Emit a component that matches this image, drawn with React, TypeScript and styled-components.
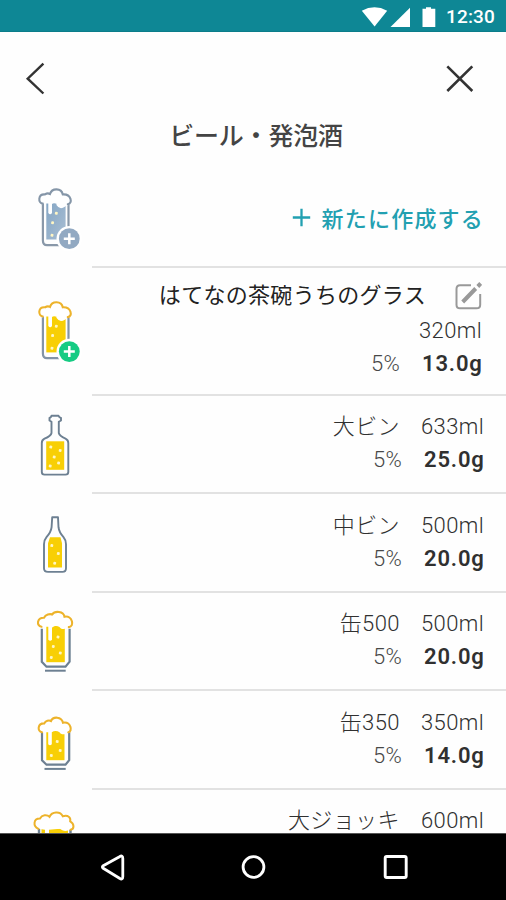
import React from "react";
import styled, { createGlobalStyle } from "styled-components";

const GlobalStyle = createGlobalStyle`
  * { box-sizing: border-box; }
  body {
    margin: 0;
    background: #fff;
    font-family: Roboto, "Noto Sans CJK JP", sans-serif;
    overflow: hidden;
  }
  svg { display: block; flex: none; }
`;

const Screen = styled.div`
  display: flex;
  flex-direction: column;
  width: 506px;
  height: 900px;
  overflow: hidden;
  background: #fefefe;
`;

const StatusBar = styled.header`
  display: flex;
  align-items: center;
  justify-content: flex-end;
  flex: none;
  height: 32px;
  padding-right: 10px;
  background: #0e8795;
  color: #fff;
  border-bottom: 1px solid #0b7d8a;
`;

const Clock = styled.span`
  margin-left: 9px;
  width: 50px;
  font-size: 19px;
  font-weight: 500;
  line-height: 32px;
  letter-spacing: 0.15px;
  padding-top: 3px;
`;

const Toolbar = styled.nav`
  display: flex;
  justify-content: space-between;
  flex: none;
  height: 84px;
  padding: 28px 28px 0 20px;
`;

const IconButton = styled.button`
  width: 36px;
  height: 36px;
  padding: 0;
  border: 0;
  background: none;
`;

const Title = styled.h1`
  flex: none;
  height: 52px;
  margin: 0;
  padding: 1px 0 0 6px;
  text-align: center;
  font-size: 25px;
  font-weight: 500;
  line-height: 40px;
  letter-spacing: -0.2px;
  color: #444;
`;

const List = styled.main`
  flex: 1;
  min-height: 0;
  overflow: hidden;
`;

const Row = styled.section<{ $height: number }>`
  display: grid;
  grid-template-columns: 92px 1fr;
  height: ${(p) => p.$height}px;
`;

const RowBody = styled.div<{ $top: number; $right: number }>`
  display: flex;
  flex-direction: column;
  padding: ${(p) => p.$top}px ${(p) => p.$right}px 0 0;
  border-bottom: 2px solid #e2e2e2;
`;

const Line = styled.div`
  display: flex;
  justify-content: flex-end;
  align-items: baseline;
  height: 33px;
  font-size: 22px;
  line-height: 33px;
  font-weight: 300;
  color: #303030;
  white-space: nowrap;
`;

const Name = styled.span`
  margin-right: 21px;
  letter-spacing: 0.4px;
`;

const Volume = styled.span`
  letter-spacing: 0.4px;
`;

const Percent = styled.span`
  margin-right: 22px;
  letter-spacing: 0.3px;
  color: #484848;
`;

const Alcohol = styled.span`
  font-weight: 600;
  letter-spacing: 0.8px;
  margin-right: -0.6px;
`;

const CreateLink = styled.button`
  display: flex;
  justify-content: flex-end;
  align-items: center;
  gap: 11px;
  height: 40px;
  padding: 0;
  border: 0;
  background: none;
  color: #22a0b1;
  font-family: inherit;
  font-size: 22px;
  font-weight: 500;
  letter-spacing: 1.2px;
  margin-right: -1px;
`;

const CustomHeader = styled.div`
  display: flex;
  justify-content: flex-end;
  align-items: center;
  gap: 28px;
  height: 36px;
`;

const CustomName = styled.span`
  font-size: 22px;
  line-height: 34px;
  letter-spacing: 0.3px;
  color: #222;
`;

const NavBar = styled.footer`
  flex: none;
  display: flex;
  justify-content: space-between;
  align-items: center;
  height: 67px;
  padding: 0 97px 0 99px;
  background: #000;
  border-top: 1px solid #555;
`;

const SLATE = "#6d8092";
const AMBER = "#edb32b";
const YELLOW = "#f8cf05";

const TALL_FOAM =
  "M22.8 28.6C17.8 28 17.8 18.8 25 19.4C26.5 18.4 28.5 18.2 30 19C32 12.7 41.3 12.9 42.8 19.4C51.4 18.8 53 28.6 47.8 29.2C45 29.4 44 32.2 41 32.2C38.8 32.2 38 30.4 37 29";

function Bubbles({ points }: { points: number[][] }) {
  return (
    <g fill="#fff6c4">
      {points.map(([x, y]) => (
        <rect key={`${x}-${y}`} x={x - 1.4} y={y - 1.4} width="2.8" height="2.8" rx=".8" transform={`rotate(12 ${x} ${y})`} />
      ))}
    </g>
  );
}

function TallGlass({ muted, y }: { muted?: boolean; y: number }) {
  return (
    <svg width="92" height="98" viewBox="-20 0 92 98">
      <defs>
        <linearGradient id="mutedBeer" x1="0" y1="0" x2="1" y2="1">
          <stop offset="0" stopColor="#83a5c4" />
          <stop offset="1" stopColor="#a9bed3" />
        </linearGradient>
      </defs>
      <g transform={`translate(0 ${y})`} fill="none">
        <path d="M22.9 29V65.5Q22.9 70.2 27 70.2H45Q48.5 69.5 48.5 65V29" stroke={muted ? "#8998a9" : "#8394a7"} strokeWidth="2.2" />
        <path d="M26.3 26H45.6V64.5H26.3Z" fill={muted ? "url(#mutedBeer)" : YELLOW} />
        <path d={`${TALL_FOAM}C35 28 33 28 32 29V38Q30.2 40.5 28.3 38V28.6Z`} fill="#fff" />
        <path d={TALL_FOAM} stroke="#fff" strokeWidth="2" />
        <path
          d="M22.8 28.6C17.8 28 17.8 18.8 25 19.4C26.5 18.4 28.5 18.2 30 19C32 12.7 41.3 12.9 42.8 19.4C51.4 18.8 53 28.6 47.8 29.2"
          stroke={muted ? "#8596a8" : AMBER}
          strokeWidth="2.1"
          strokeLinecap="round"
        />
        <Bubbles points={[[36.3, 38.3], [32.6, 47.7], [32, 60.3]]} />
        <circle cx="49.3" cy="63.7" r="12.8" fill="#fff" />
        <circle cx="49.3" cy="63.7" r="10.4" fill={muted ? "#92a9c2" : "#16cb83"} />
        <path d="M43.8 63.7H54.8M49.3 58.2V69.2" stroke="#fff" strokeWidth="2.5" />
      </g>
    </svg>
  );
}

function LargeBottle() {
  return (
    <svg width="92" height="96" viewBox="-20 -4 92 96" fill="none">
      <path d="M31.5 24.5V21.8L29.5 20.5V18Q31.2 17.3 31.5 15.7H38.5Q39 17.4 41 18V20.5L38.8 21.8V33Q39.5 36 45.5 38.7Q48.3 40 48.3 43V72Q48.3 74.6 45.5 74.6H24.5Q21.8 74.6 21.8 72V43Q21.8 40 24.5 38.7Q31 36 31.5 33Z" stroke={SLATE} strokeWidth="1.9" strokeLinejoin="round" />
      <rect x="26.2" y="41.3" width="18" height="28.5" fill={YELLOW} />
      <Bubbles points={[[30.8, 47], [40.2, 50.4], [34.2, 57], [38.6, 63], [30.2, 66]]} />
    </svg>
  );
}

function MediumBottle() {
  return (
    <svg width="92" height="96" viewBox="-20 -5.2 92 96" fill="none">
      <path d="M32.2 18H38L38.5 28Q39 33 43.5 38Q46 41 46 45V69Q46 72.7 42.5 72.7H28Q24 72.7 24 69V45Q24 41 26.5 38Q31 33 31.6 28Z" stroke={SLATE} strokeWidth="1.9" strokeLinejoin="round" />
      <path d="M30 38H40.5L42 44V68.2H28V44Z" fill={YELLOW} />
      <Bubbles points={[[31.8, 46.4], [38.3, 54.4], [34.7, 64]]} />
    </svg>
  );
}

function LargeCan() {
  return (
    <svg width="92" height="96" viewBox="-20 -6.7 92 96" fill="none">
      <path d="M21.8 29V62L26.5 67H45.5L49.6 62V29" stroke={SLATE} strokeWidth="2.2" />
      <path d="M25 71H45.7" stroke={SLATE} strokeWidth="2" />
      <rect x="26.3" y="25" width="18.5" height="37.5" fill={YELLOW} />
      <path d="M21.5 27C16 26 17 17.8 24 18C25.5 15 30 13.8 32 14.8C35 10.8 43.5 11.4 44.5 17C52.5 15.5 54.8 27 48.8 27.4C45.5 30 41.5 30.2 39.5 27.2C37 26 34 26 32 28V40Q30.2 42.3 28.3 40V27Z" fill="#fff" />
      <path d="M21.5 27C16 26 17 17.8 24 18C25.5 15 30 13.8 32 14.8C35 10.8 43.5 11.4 44.5 17C52.5 15.5 54.8 27 48.8 27.4" stroke={AMBER} strokeWidth="2.1" strokeLinecap="round" />
      <Bubbles points={[[38, 37.3], [33.3, 46.7], [40.3, 53.3], [31.3, 57.7]]} />
    </svg>
  );
}

function SmallCan() {
  return (
    <svg width="92" height="96" viewBox="-20 -8.2 92 96" fill="none">
      <path d="M22 33V61L26.5 65.5H45.5L49.2 61V33" stroke={SLATE} strokeWidth="2.2" />
      <path d="M24.5 69.7H45.7" stroke={SLATE} strokeWidth="2" />
      <rect x="26.3" y="31" width="18.2" height="30" fill={YELLOW} />
      <path d="M22 33C17 32 17.5 24 24.3 24.2C25.5 21.5 29 20.7 31 21.8C33 17 41.5 17.2 43 23.5C50.8 22 53 32 48.3 33C44.5 36.2 41 35.5 39.5 33C37 31.5 34 31.5 31.8 33V45Q30 47 28.2 45V33Z" fill="#fff" />
      <path d="M22 33C17 32 17.5 24 24.3 24.2C25.5 21.5 29 20.7 31 21.8C33 17 41.5 17.2 43 23.5C50.8 22 53 32 48.3 33" stroke={AMBER} strokeWidth="2.1" strokeLinecap="round" />
      <Bubbles points={[[37.2, 42.3], [40.2, 51.3], [31.3, 56.3]]} />
    </svg>
  );
}

function LargeMug() {
  return (
    <svg width="92" height="96" viewBox="-20 90.2 92 96" fill="none">
      <path d="M19 128V160M50.5 130V160" stroke={SLATE} strokeWidth="2.4" />
      <path d="M21.5 129H48V160H21.5Z" fill={YELLOW} />
      <path d="M18.5 129C12.5 126.5 13.5 118.5 20 118.7C22 115 27 114.5 29.5 117C32 112 40 111 42.8 116.5C48 115 51 117.5 50.2 121.5C54.5 124 54.5 129.5 50.5 130C46 132 42 131 40 129L29 130V140H25V130Z" fill="#fff" />
      <path d="M18.5 129C12.5 126.5 13.5 118.5 20 118.7C22 115 27 114.5 29.5 117C32 112 40 111 42.8 116.5C48 115 51 117.5 50.2 121.5C54.5 124 54.5 129.5 50.5 130" stroke={AMBER} strokeWidth="2" strokeLinecap="round" />
    </svg>
  );
}

const drinks = [
  { name: "大ビン", volume: "633ml", alcohol: "25.0g", Icon: LargeBottle },
  { name: "中ビン", volume: "500ml", alcohol: "20.0g", Icon: MediumBottle },
  { name: "缶500", volume: "500ml", alcohol: "20.0g", Icon: LargeCan },
  { name: "缶350", volume: "350ml", alcohol: "14.0g", Icon: SmallCan },
  { name: "大ジョッキ", volume: "600ml", alcohol: null, Icon: LargeMug },
];

export default function App() {
  return (
    <>
      <GlobalStyle />
      <Screen>
        <StatusBar>
          <svg width="76" height="32" viewBox="361 0 76 32" fill="#fff">
            <path d="M361.8 10.7Q374.5 3.9 387.2 10.7L374.6 26.5Z" />
            <path d="M410 7.7V26.9H390.5Z" />
            <path d="M426 7.2h5v1.6h4.3v18.2h-12.8v-18.2h3.5z" />
          </svg>
          <Clock>12:30</Clock>
        </StatusBar>
        <Toolbar>
          <IconButton aria-label="戻る">
            <svg width="36" height="36" viewBox="20 60 36 36" fill="none" stroke="#333" strokeWidth="2.4">
              <path d="M43.4 63.7L27.7 78.7L43.4 93.5" />
            </svg>
          </IconButton>
          <IconButton aria-label="閉じる">
            <svg width="36" height="36" viewBox="442 60 36 36" fill="none" stroke="#333" strokeWidth="2.6">
              <path d="M447.3 66.3L472.3 91M472.3 66.3L447.3 91" />
            </svg>
          </IconButton>
        </Toolbar>
        <Title>ビール・発泡酒</Title>
        <List>
          <Row $height={99.7}>
            <TallGlass muted y={7} />
            <RowBody $top={29} $right={23}>
              <CreateLink>
                <svg width="19" height="19" viewBox="0 0 19 19" stroke="currentColor" strokeWidth="2.3">
                  <path d="M.8 9.5H18.2M9.5 .8V18.2" />
                </svg>
                新たに作成する
              </CreateLink>
            </RowBody>
          </Row>
          <Row $height={128}>
            <TallGlass y={19.9} />
            <RowBody $top={10} $right={24}>
              <CustomHeader>
                <CustomName>はてなの茶碗うちのグラス</CustomName>
                <svg width="28" height="28" viewBox="454 281 28 28" fill="none" stroke="#999" strokeWidth="2">
                  <path d="M471 284.3H460Q456.5 284.3 456.5 288V303.7Q456.5 307.3 460 307.3H476.5Q480.2 307.3 480.2 303.7V293" />
                  <path d="M462.7 301L475.7 287.5M477.8 285.5L480.7 282.5" strokeWidth="4" />
                </svg>
              </CustomHeader>
              <Line><Volume>320ml</Volume></Line>
              <Line><Percent>5%</Percent><Alcohol>13.0g</Alcohol></Line>
            </RowBody>
          </Row>
          {drinks.map(({ name, volume, alcohol, Icon }) => (
            <Row key={name} $height={98.5}>
              <Icon />
              <RowBody $top={14.7} $right={22}>
                <Line><Name>{name}</Name><Volume>{volume}</Volume></Line>
                {alcohol && <Line><Percent>5%</Percent><Alcohol>{alcohol}</Alcohol></Line>}
              </RowBody>
            </Row>
          ))}
        </List>
        <NavBar>
          <svg width="28" height="30" viewBox="99 851 28 30" fill="none" stroke="#fff" strokeWidth="2.8" strokeLinejoin="round">
            <path d="M103.2 865.7Q101.5 867 103.2 868.3L119.5 878.3Q122.8 880.3 122.8 876.5V858.5Q122.8 854.7 119.5 856.7Z" transform="translate(0 -1)" />
          </svg>
          <svg width="26" height="26" viewBox="0.5 0 26 26" fill="none" stroke="#fff" strokeWidth="2.8">
            <circle cx="13" cy="13" r="10.4" />
          </svg>
          <svg width="28" height="28" viewBox="-0.7 0 28 28" fill="none" stroke="#fff" strokeWidth="2.9">
            <rect x="3.5" y="3.5" width="21" height="21" rx="1.5" />
          </svg>
        </NavBar>
      </Screen>
    </>
  );
}
